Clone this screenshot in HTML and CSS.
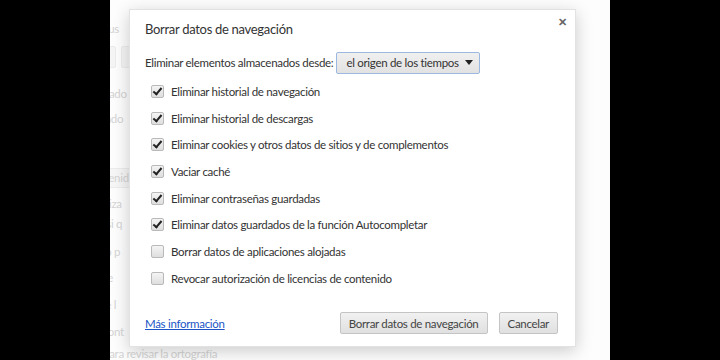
FILE: index.html
```html
<!DOCTYPE html>
<html>

<head>
    <title>Borrar datos de navegación</title>
    <link rel="stylesheet" href="styles.css">
</head>

<body>

    <div class="stage">
        <div class="page">
            <div class="line l1">Configuración de los datos que has us</div>
            <div class="line l2"><span class="ghost-btn"></span><span class="ghost-btn"></span></div>
            <div class="line l3">Ajustes de contenido avanzado</div>
            <div class="line l4">Historial del navegador borrado avanzado</div>
            <div class="line l5"><span class="ghost-input">Ajustes de contenid</span></div>
            <div class="line l6">Sugerencias para actualiza</div>
            <div class="line l7">Preguntar dónde si q</div>
            <div class="line l8">Usar un servicio web p</div>
            <div class="line l9">Predecir acciones de la pre</div>
            <div class="line l10">Enviar estadísticas de l</div>
            <div class="line l11">Protección de la cont</div>
            <div class="line l12">Usar un servicio web para revisar la ortografía</div>
        </div>

        <div class="dialog">
            <div class="dialog-head">
                <h1>Borrar datos de navegación</h1>
                <span class="close">&#x2715;</span>
            </div>

            <div class="since">
                <label>Eliminar elementos almacenados desde:</label>
                <div class="select">
                    <span>el origen de los tiempos</span>
                    <span class="arrow"></span>
                </div>
            </div>

            <ul class="options">
                <li><span class="box checked"></span>Eliminar historial de navegación</li>
                <li><span class="box checked"></span>Eliminar historial de descargas</li>
                <li><span class="box checked"></span>Eliminar cookies y otros datos de sitios y de complementos</li>
                <li><span class="box checked"></span>Vaciar caché</li>
                <li><span class="box checked"></span>Eliminar contraseñas guardadas</li>
                <li><span class="box checked"></span>Eliminar datos guardados de la función Autocompletar</li>
                <li><span class="box"></span>Borrar datos de aplicaciones alojadas</li>
                <li><span class="box"></span>Revocar autorización de licencias de contenido</li>
            </ul>

            <div class="dialog-foot">
                <a href="#">Más información</a>
                <div class="buttons">
                    <button>Borrar datos de navegación</button>
                    <button>Cancelar</button>
                </div>
            </div>
        </div>
    </div>

</body>

</html>
```

FILE: styles.css
```css
body {
    margin: 0;
    background-color: #000;
    font-family: Lato, "Open Sans", sans-serif;
}

.stage {
    position: relative;
    width: 500px;
    height: 360px;
    margin-left: 110px;
    background-color: #fdfdfd;
    overflow: hidden;
}

.page {
    display: flex;
    flex-direction: column;
    padding-top: 22px;
    color: #d4d4d4;
    font-size: 11.5px;
    letter-spacing: -0.3px;
}

.line {
    height: 14px;
    line-height: 14px;
    white-space: nowrap;
}

.l1 { margin-left: -170px; }
.l2 { margin: 10px 0 0 -40px; display: flex; gap: 5px; height: 20px; }
.l3 { margin: 21px 0 0 -131px; }
.l4 { margin: 11px 0 0 -184px; }
.l5 { margin: 45px 0 0 -80px; }
.l6 { margin: 12px 0 0 -112px; }
.l7 { margin: 6px 0 0 -86px; }
.l8 { margin: 14px 0 0 -97px; }
.l9 { margin: 12px 0 0 -123px; }
.l10 { margin: 13px 0 0 -100px; }
.l11 { margin: 13px 0 0 -86px; }
.l12 { margin: 8px 0 0 -108px; }

.ghost-btn {
    width: 44px;
    height: 20px;
    border: 1px solid #ececec;
    background-color: #f5f5f5;
    border-radius: 2px;
}

.ghost-input {
    display: inline-block;
    line-height: 18px;
    padding: 0 4px;
    margin-top: -3px;
    border: 1px solid #ececec;
    background-color: #f6f6f6;
}

.dialog {
    position: absolute;
    left: 19px;
    top: 9px;
    width: 447px;
    height: 338px;
    box-sizing: border-box;
    padding: 0 17px 0 15px;
    background-color: #fff;
    border: 1px solid #e2e2e2;
    box-shadow: 0 4px 16px rgba(0, 0, 0, 0.2);
    color: #333;
    font-size: 11.5px;
    letter-spacing: -0.3px;
    display: flex;
    flex-direction: column;
}

.dialog-head {
    display: flex;
    justify-content: space-between;
    align-items: flex-start;
    height: 40px;
}

h1 {
    margin: 11px 0 0 0;
    font-size: 13px;
    font-weight: normal;
    letter-spacing: -0.3px;
    color: #333;
}

.close {
    margin: 5px -9px 0 0;
    font-size: 11px;
    font-weight: bold;
    color: #666;
}

.since {
    display: flex;
    align-items: center;
    gap: 3px;
    height: 25px;
}

.select {
    display: flex;
    align-items: center;
    justify-content: space-between;
    box-sizing: border-box;
    width: 144px;
    height: 22px;
    padding: 0 6px 0 9px;
    border: 1px solid #9cb7e0;
    border-radius: 2px;
    background: linear-gradient(#f0f0f0, #e2e2e2);
    color: #333;
    white-space: nowrap;
}

.arrow {
    width: 0;
    height: 0;
    border-left: 4px solid transparent;
    border-right: 4px solid transparent;
    border-top: 5px solid #222;
}

.options {
    list-style: none;
    margin: 3px 0 0 0;
    padding: 0 0 0 6px;
}

.options li {
    display: flex;
    align-items: center;
    gap: 7px;
    height: 26.7px;
}

.box {
    width: 11px;
    height: 11px;
    border: 1px solid #b9b9b9;
    border-radius: 2px;
    background: linear-gradient(#f4f4f4, #dedede);
    position: relative;
}

.box.checked::after {
    content: "";
    position: absolute;
    left: 3px;
    top: 0;
    width: 3px;
    height: 7px;
    border-right: 2px solid #222;
    border-bottom: 2px solid #222;
    transform: rotate(40deg);
}

.dialog-foot {
    margin-top: auto;
    display: flex;
    justify-content: space-between;
    align-items: center;
    height: 46px;
}

.dialog-foot a {
    color: #1a55c6;
    text-decoration: underline;
}

.buttons {
    display: flex;
    gap: 11px;
}

button {
    height: 22px;
    padding: 0 8px;
    font-family: inherit;
    font-size: 11.5px;
    letter-spacing: -0.3px;
    color: #444;
    border: 1px solid #c4c4c4;
    border-radius: 2px;
    background: linear-gradient(#f1f1f1, #e0e0e0);
}
```
